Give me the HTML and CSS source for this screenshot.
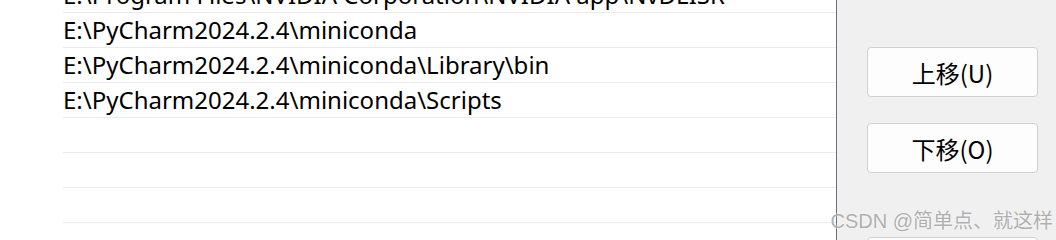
FILE: index.html
```html
<!DOCTYPE html>
<html lang="zh-CN">

<head>
    <meta charset="UTF-8" />
    <title>编辑环境变量</title>
    <link rel="stylesheet" href="styles.css">
</head>

<body>

    <div class="window">
        <div class="path-list">
            <div class="rows">
                <div class="row">E:\Program Files\NVIDIA Corporation\NVIDIA app\NvDLISR</div>
                <div class="row">E:\PyCharm2024.2.4\miniconda</div>
                <div class="row">E:\PyCharm2024.2.4\miniconda\Library\bin</div>
                <div class="row">E:\PyCharm2024.2.4\miniconda\Scripts</div>
                <div class="row"></div>
                <div class="row"></div>
                <div class="row"></div>
                <div class="row"></div>
            </div>
        </div>

        <div class="side-panel">
            <button class="side-btn">上移(U)</button>
            <button class="side-btn">下移(O)</button>
            <button class="side-btn side-btn-gap"></button>
        </div>

        <div class="watermark">CSDN @简单点、就这样</div>
    </div>

</body>

</html>
```

FILE: styles.css
```css
* {
    box-sizing: border-box;
}

body {
    margin: 0;
    padding: 0;
    font-family: 'Noto Sans', 'Noto Sans CJK SC', sans-serif;
    color: #000;
    background: #f0f0f0;
}

.window {
    position: relative;
    display: flex;
    width: 1056px;
    height: 240px;
    overflow: hidden;
}

.path-list {
    width: 837px;
    background: #fff;
    border-right: 1px solid #6e6e7a;
    overflow: hidden;
}

.rows {
    margin-top: -22px;
    margin-left: 63px;
}

.row {
    height: 35px;
    line-height: 34px;
    font-size: 24px;
    border-bottom: 1px solid #ebebeb;
    white-space: nowrap;
}

.side-panel {
    flex: 1;
    display: flex;
    flex-direction: column;
    gap: 26px;
    padding: 47px 18px 0 30px;
    background: #f0f0f0;
}

.side-btn {
    flex-shrink: 0;
    height: 50px;
    width: 171px;
    background: #fdfdfd;
    border: 1px solid #d0d0d0;
    border-radius: 4px;
    font-family: 'Noto Sans CJK SC', sans-serif;
    font-size: 24px;
    color: #000;
    padding: 0;
}

.side-btn-gap {
    margin-top: 38px;
}

.watermark {
    position: absolute;
    right: 3px;
    bottom: 6px;
    font-family: 'Liberation Sans', 'Noto Sans CJK SC', sans-serif;
    font-size: 20px;
    color: rgba(150, 150, 150, 0.75);
    text-shadow: 0 0 2px #fff;
    white-space: nowrap;
}
```
